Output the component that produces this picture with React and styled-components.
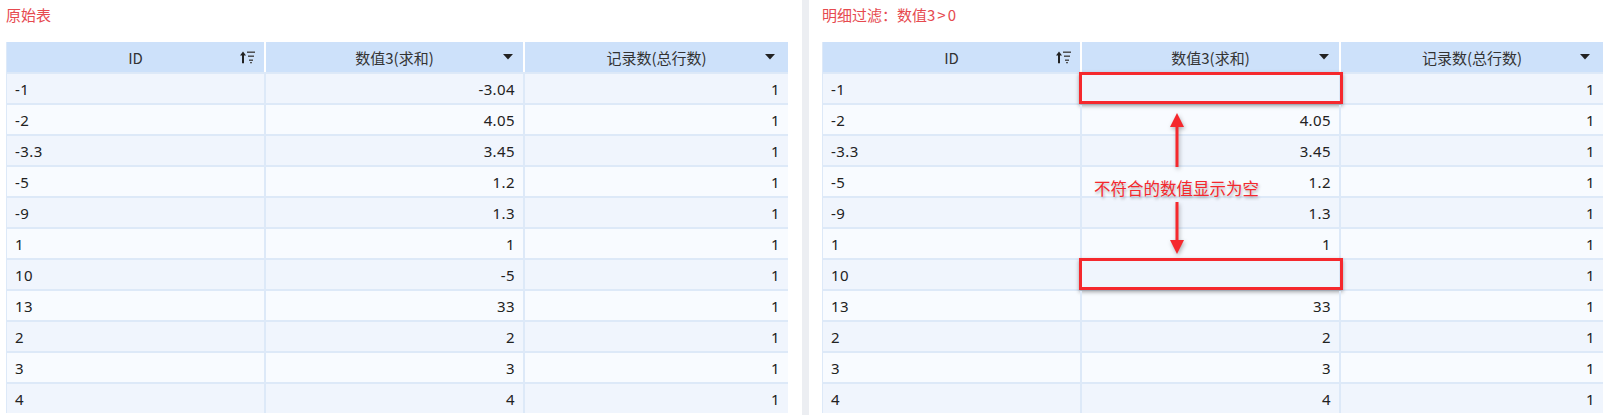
import React from "react";
import styled, { createGlobalStyle } from "styled-components";

const GlobalStyle = createGlobalStyle`
  html, body {
    margin: 0;
    padding: 0;
    background: #fff;
  }
  body {
    font-family: "Noto Sans", "Noto Sans CJK SC", sans-serif;
    color: #333;
  }
`;

const Page = styled.div`
  display: flex;
  width: 1614px;
  height: 415px;
  overflow: hidden;
  background: #fff;
`;

const Panel = styled.section`
  position: relative;
  box-sizing: border-box;
  width: ${(p) => p.width};
  flex: ${(p) => (p.width ? "none" : "1")};
  padding: ${(p) => p.pad};
`;

const Divider = styled.div`
  width: 7px;
  flex: none;
  background: #eceef2;
`;

const Title = styled.div`
  height: 42px;
  box-sizing: border-box;
  padding-top: 5px;
  font-size: 15px;
  line-height: 20px;
  color: #e64a4f;
  font-family: "Noto Sans CJK SC", "Noto Sans", sans-serif;
  .gt {
    margin: 0 2px;
  }
`;

const TableWrap = styled.div`
  position: relative;
  border-left: 1px solid #dde9f8;
`;

const Row = styled.div`
  display: grid;
  grid-template-columns: 259px 259px 1fr;
  height: ${(p) => (p.head ? "30px" : "31px")};
  box-sizing: border-box;
  border-top: ${(p) => (p.head ? "none" : "2px solid #dde9f8")};
  background: ${(p) => (p.head ? "#cde1fa" : p.odd ? "#f0f5fd" : "#f8fbff")};
`;

const HeadCell = styled.div`
  position: relative;
  display: flex;
  align-items: center;
  justify-content: center;
  font-size: 15px;
  color: #333;
  font-family: "Noto Sans CJK SC", "Noto Sans", sans-serif;
  border-right: ${(p) => (p.last ? "none" : "2px solid #fff")};
`;

const HeadIcon = styled.span`
  position: absolute;
  right: ${(p) => p.right || "11px"};
  top: 50%;
  transform: translateY(-50%);
  display: flex;
`;

const Cell = styled.div`
  position: relative;
  display: flex;
  align-items: center;
  justify-content: ${(p) => (p.right ? "flex-end" : "flex-start")};
  padding: 0 8px;
  font-size: 15px;
  letter-spacing: 0.4px;
  color: #222;
  border-right: ${(p) => (p.last ? "none" : "2px solid #dde9f8")};
`;

const RedBox = styled.div`
  position: absolute;
  top: -2px;
  bottom: -1px;
  left: -3px;
  right: -4px;
  border: 3px solid #f5282d;
  box-shadow: 0 2px 4px rgba(0, 0, 0, 0.35);
  pointer-events: none;
`;

const Note = styled.div`
  position: absolute;
  left: 271px;
  top: 71px;
  display: flex;
  flex-direction: column;
  align-items: flex-start;
`;

const ArrowWrap = styled.div`
  margin-left: 76px;
  margin-top: ${(p) => p.mt || "0"};
  display: flex;
  filter: drop-shadow(1px 2px 2px rgba(0, 0, 0, 0.3));
`;

const NoteText = styled.div`
  margin-top: 10px;
  font-size: 16.5px;
  line-height: 22px;
  color: #f5282d;
  white-space: nowrap;
  font-family: "Noto Sans CJK SC", "Noto Sans", sans-serif;
  text-shadow: 1px 2px 3px rgba(0, 0, 0, 0.3);
`;

const SortIcon = () => (
  <svg width="15" height="13" viewBox="0 0 15 13">
    <path d="M3 1 L6 5 H4 V13 H2 V5 H0 Z" fill="#222" />
    <rect x="7" y="1" width="8" height="1.4" fill="#444" />
    <rect x="8" y="5" width="6" height="1.4" fill="#444" />
    <rect x="9" y="9" width="4" height="1.4" fill="#444" />
    <rect x="10" y="11.6" width="2" height="1.4" fill="#444" />
  </svg>
);

const Caret = () => (
  <svg width="10" height="6" viewBox="0 0 10 6">
    <path d="M0 0 H10 L5 5.5 Z" fill="#222" />
  </svg>
);

const Arrow = ({ down, length }) => (
  <svg width="14" height={length} viewBox={`0 0 14 ${length}`}>
    {down ? (
      <>
        <rect x="5.5" y="0" width="3" height={length - 12} fill="#f5282d" />
        <path d={`M0 ${length - 14} H14 L7 ${length} Z`} fill="#f5282d" />
      </>
    ) : (
      <>
        <path d="M7 0 L14 14 H0 Z" fill="#f5282d" />
        <rect x="5.5" y="12" width="3" height={length - 12} fill="#f5282d" />
      </>
    )}
  </svg>
);

const rows = [
  ["-1", "-3.04"],
  ["-2", "4.05"],
  ["-3.3", "3.45"],
  ["-5", "1.2"],
  ["-9", "1.3"],
  ["1", "1"],
  ["10", "-5"],
  ["13", "33"],
  ["2", "2"],
  ["3", "3"],
  ["4", "4"],
];

const DataTable = ({ filtered }) => (
  <TableWrap>
    <Row head>
      <HeadCell>
        ID
        <HeadIcon right="9px">
          <SortIcon />
        </HeadIcon>
      </HeadCell>
      <HeadCell>
        数值3(求和)
        <HeadIcon right="10px">
          <Caret />
        </HeadIcon>
      </HeadCell>
      <HeadCell last>
        记录数(总行数)
        <HeadIcon right="13px">
          <Caret />
        </HeadIcon>
      </HeadCell>
    </Row>
    {rows.map(([id, val], i) => {
      const hide = filtered && parseFloat(val) <= 0;
      return (
        <Row key={id} odd={i % 2 === 0}>
          <Cell>{id}</Cell>
          <Cell right>
            {hide ? "" : val}
            {hide && <RedBox />}
          </Cell>
          <Cell right last>
            1
          </Cell>
        </Row>
      );
    })}
    {filtered && (
      <Note>
        <ArrowWrap>
          <Arrow length={54} />
        </ArrowWrap>
        <NoteText>不符合的数值显示为空</NoteText>
        <ArrowWrap mt="3px">
          <Arrow down length={52} />
        </ArrowWrap>
      </Note>
    )}
  </TableWrap>
);

export default function App() {
  return (
    <>
      <GlobalStyle />
      <Page>
        <Panel width="802px" pad="0 14px 0 6px">
          <Title>原始表</Title>
          <DataTable />
        </Panel>
        <Divider />
        <Panel pad="0 11px 0 13px">
          <Title>
            明细过滤：数值3<span className="gt">&gt;</span>0
          </Title>
          <DataTable filtered />
        </Panel>
      </Page>
    </>
  );
}
